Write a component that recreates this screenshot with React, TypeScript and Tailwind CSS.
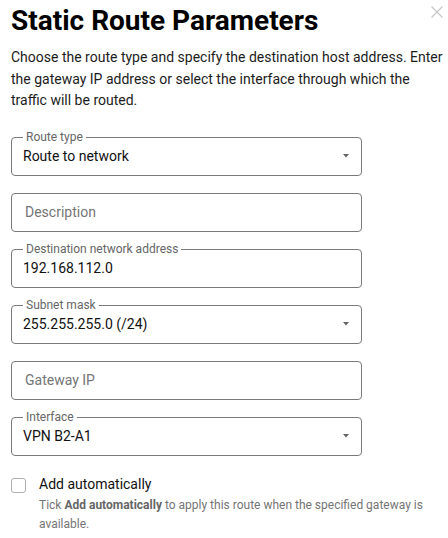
import { useState } from 'react';

type Field = {
  label: string;
  value?: string;
  select?: boolean;
};

const fields: Field[] = [
  { label: 'Route type', value: 'Route to network', select: true },
  { label: 'Description' },
  { label: 'Destination network address', value: '192.168.112.0' },
  { label: 'Subnet mask', value: '255.255.255.0 (/24)', select: true },
  { label: 'Gateway IP' },
  { label: 'Interface', value: 'VPN B2-A1', select: true },
];

function OutlinedField({ label, value, select }: Field) {
  const filled = !!value;
  return (
    <div className="relative h-[39px] w-[351px] rounded-[4px] border border-[#7a7a7a]">
      {filled && (
        <span className="absolute left-[11px] top-[-8px] bg-white px-[3px] text-[12px] leading-[14px] text-[#666]">
          {label}
        </span>
      )}
      <div className="flex h-full items-center pl-[11px] pr-[12px]">
        {filled ? (
          <span className="flex-1 text-[14px] text-[#111]">{value}</span>
        ) : (
          <span className="flex-1 pl-[2px] text-[14px] text-[#757575]">{label}</span>
        )}
        {select && (
          <svg width="6" height="4" viewBox="0 0 6 4" className="mt-[-1px]">
            <path d="M0 0h6L3 3.5z" fill="#666" />
          </svg>
        )}
      </div>
    </div>
  );
}

export default function App() {
  const [checked, setChecked] = useState(false);

  return (
    <div className="relative min-h-[538px] w-[448px] bg-white pl-[11px] pr-[4px] pt-[4px] font-['Roboto',sans-serif]">
      <button className="absolute right-[5px] top-[6px] p-0 text-[#c8c8c8]" aria-label="Close">
        <svg width="12" height="12" viewBox="0 0 12 12">
          <path d="M0.5 0.5l11 11M11.5 0.5l-11 11" stroke="currentColor" strokeWidth="1.3" />
        </svg>
      </button>

      <h1 className="text-[28px] font-bold leading-[34px] text-black">Static Route Parameters</h1>
      <p className="mt-[9px] text-[14px] leading-[21.5px] text-[#1c1c1c]">
        Choose the route type and specify the destination host address. Enter the gateway IP address or select the interface through which the traffic will be routed.
      </p>

      <div className="mt-[25px] flex flex-col gap-[17px]">
        {fields.map((f) => (
          <OutlinedField key={f.label} {...f} />
        ))}
      </div>

      <div className="mt-[18px] flex items-start gap-[13px]">
        <button
          onClick={() => setChecked(!checked)}
          className="mt-[4px] h-[15px] w-[15px] shrink-0 rounded-[3px] border border-[#b0b0b0] bg-white"
          aria-label="Add automatically"
        />
        <div className="pr-[7px]">
          <div className="text-[14px] leading-[20px] text-[#111]">Add automatically</div>
          <p className="mt-[2px] text-[12px] leading-[19.5px] text-[#757575]">
            Tick <b className="font-bold text-[#666]">Add automatically</b> to apply this route when the specified gateway is available.
          </p>
        </div>
      </div>
    </div>
  );
}
